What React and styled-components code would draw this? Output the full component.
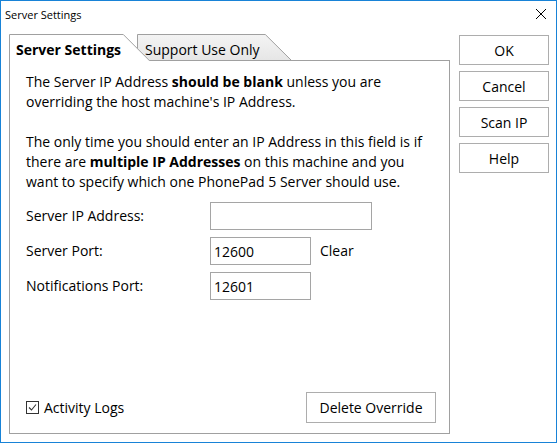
import React from 'react'
import styled, { createGlobalStyle } from 'styled-components'

const FONT = `"Open Sans", "Liberation Sans", sans-serif`

const GlobalStyle = createGlobalStyle`
    body {
        margin: 0;
        font-family: ${FONT};
        color: #000;
    }
`

const Window = styled.div`
    width: 557px;
    height: 443px;
    box-sizing: border-box;
    border: 1px solid #1883d7;
    background: #fff;
    display: flex;
    flex-direction: column;
`

const TitleBar = styled.div`
    height: 26px;
    display: flex;
    align-items: center;
    justify-content: space-between;
    padding: 0 10px 0 4px;
    font-size: 11px;
`

const Body = styled.div`
    display: flex;
    padding: 7px 0 0 8px;
`

const LeftColumn = styled.div`
    width: 441px;
    display: flex;
    flex-direction: column;
`

const TabStrip = styled.div`
    display: flex;
    height: 26px;
    align-items: flex-start;
`

const Tab = styled.div`
    position: relative;
    flex: none;
    width: ${p => p.width}px;
    height: ${p => (p.active ? 27 : 26)}px;
    margin-left: ${p => p.offset || 0}px;
    z-index: ${p => (p.active ? 2 : 1)};
    font-size: 14px;
    font-weight: ${p => (p.active ? 700 : 400)};
    line-height: 20px;
    box-sizing: border-box;
    padding: 6px 0 0 ${p => p.pad}px;

    svg {
        position: absolute;
        left: 0;
        top: 0;
        z-index: -1;
    }
`

const TabLabel = styled.span`
    position: relative;
    white-space: nowrap;
`

const Panel = styled.div`
    height: 374px;
    box-sizing: border-box;
    border: 1px solid #a0a0a0;
    padding: 11px 13px 10px 16px;
    display: flex;
    flex-direction: column;
    font-size: 14px;
    line-height: 20px;
`

const Paragraph = styled.p`
    margin: 0 0 20px;
    white-space: nowrap;
`

const Form = styled.div`
    display: grid;
    grid-template-columns: 184px auto;
    grid-auto-rows: 28px;
    row-gap: 7px;
    align-items: center;
    margin-top: -10px;
`

const Label = styled.span`
    white-space: nowrap;
`

const FieldRow = styled.div`
    display: flex;
    align-items: center;
    gap: 9px;
`

const Input = styled.input`
    width: ${p => p.width}px;
    height: 28px;
    box-sizing: border-box;
    border: 1px solid #a5a5a5;
    padding: 0 3px;
    font-family: ${FONT};
    font-size: 14px;
    color: #000;
    outline: none;
`

const Footer = styled.div`
    margin-top: auto;
    display: flex;
    align-items: center;
    justify-content: space-between;
`

const CheckLabel = styled.label`
    display: flex;
    align-items: center;
    gap: 5px;
`

const CheckBox = styled.span`
    width: 13px;
    height: 13px;
    box-sizing: border-box;
    border: 1px solid #333;
    display: flex;
    align-items: center;
    justify-content: center;
`

const Button = styled.button`
    width: ${p => p.width || 90}px;
    height: ${p => p.height || 30}px;
    box-sizing: border-box;
    border: 1px solid #adadad;
    background: #fff;
    font-family: ${FONT};
    font-size: 14px;
    color: #000;
    padding: 0;
`

const RightColumn = styled.div`
    margin-left: 9px;
    padding-top: 1px;
    display: flex;
    flex-direction: column;
    gap: 6px;
`

const ActiveTabShape = () => (
    <svg width="141" height="27" viewBox="0 0 141 27">
        <path d="M0 27 V0 H114 L141 27 Z" fill="#fff" />
        <path d="M0.5 27 V0.5 H114.3 L140.8 27" fill="none" stroke="#a0a0a0" />
    </svg>
)

const InactiveTabShape = () => (
    <svg width="156" height="26" viewBox="0 0 156 26">
        <defs>
            <linearGradient id="tabfill" x1="0" y1="0" x2="0" y2="1">
                <stop offset="0" stopColor="#f4f4f4" />
                <stop offset="1" stopColor="#e6e6e6" />
            </linearGradient>
        </defs>
        <path d="M0 26 V0 H128 L154 26 Z" fill="url(#tabfill)" />
        <path d="M0.5 26 V0.5 H128.3 L154 26" fill="none" stroke="#a0a0a0" />
    </svg>
)

const App = () => (
    <Window>
        <GlobalStyle />
        <TitleBar>
            <span>Server Settings</span>
            <svg width="10" height="10" viewBox="0 0 10 10">
                <path d="M0 0 L10 10 M10 0 L0 10" stroke="#000" strokeWidth="1" />
            </svg>
        </TitleBar>
        <Body>
            <LeftColumn>
                <TabStrip>
                    <Tab active width={141} pad={7}>
                        <ActiveTabShape />
                        <TabLabel>Server Settings</TabLabel>
                    </Tab>
                    <Tab width={156} offset={-13} pad={8}>
                        <InactiveTabShape />
                        <TabLabel>Support Use Only</TabLabel>
                    </Tab>
                </TabStrip>
                <Panel>
                    <Paragraph>
                        The Server IP Address <b>should be blank</b> unless you are
                        <br />
                        overriding the host machine's IP Address.
                    </Paragraph>
                    <Paragraph>
                        The only time you should enter an IP Address in this field is if
                        <br />
                        there are <b>multiple IP Addresses</b> on this machine and you
                        <br />
                        want to specify which one PhonePad 5 Server should use.
                    </Paragraph>
                    <Form>
                        <Label>Server IP Address:</Label>
                        <FieldRow>
                            <Input width={162} defaultValue="" />
                        </FieldRow>
                        <Label>Server Port:</Label>
                        <FieldRow>
                            <Input width={101} defaultValue="12600" />
                            <span>Clear</span>
                        </FieldRow>
                        <Label>Notifications Port:</Label>
                        <FieldRow>
                            <Input width={101} defaultValue="12601" />
                        </FieldRow>
                    </Form>
                    <Footer>
                        <CheckLabel>
                            <CheckBox>
                                <svg width="9" height="9" viewBox="0 0 9 9">
                                    <path d="M1 4.5 L3.5 7 L8 1.5" fill="none" stroke="#333" strokeWidth="1.1" />
                                </svg>
                            </CheckBox>
                            Activity Logs
                        </CheckLabel>
                        <Button width={130} height={31}>Delete Override</Button>
                    </Footer>
                </Panel>
            </LeftColumn>
            <RightColumn>
                <Button>OK</Button>
                <Button>Cancel</Button>
                <Button>Scan IP</Button>
                <Button>Help</Button>
            </RightColumn>
        </Body>
    </Window>
)

export default App
